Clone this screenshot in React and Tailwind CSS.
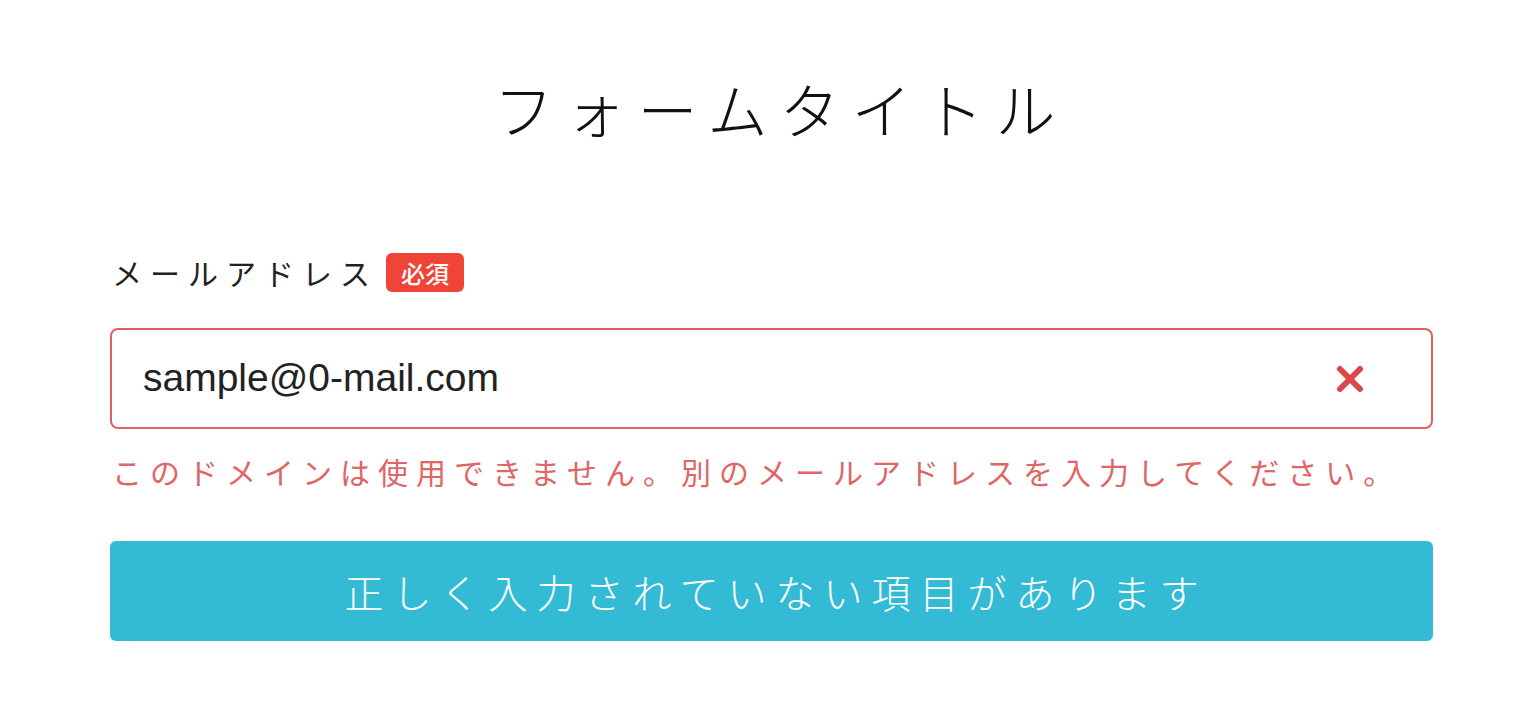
import React from 'react';

const jp = { fontFamily: '"Noto Sans CJK JP", "Noto Sans", sans-serif' };

function App() {
  return (
    <div className="min-h-screen bg-white" style={jp}>
      <div className="w-[1323px] ml-[110px] pt-[72px]">
        <h1 className="text-center text-[60px] leading-[72px] font-light tracking-[12px] text-[#111] pl-[18px]">
          フォームタイトル
        </h1>

        <div className="mt-[108px] flex items-center gap-[8px] pl-[2px]">
          <span className="text-[30px] leading-[40px] tracking-[8px] text-[#222]">メールアドレス</span>
          <span className="bg-[#f04438] text-white text-[24px] leading-[39px] px-[15px] rounded-[6px] font-medium">必須</span>
        </div>

        <div className="mt-[36px] h-[101px] border-2 border-[#e06060] rounded-[8px] flex items-center justify-between pl-[31px] pr-[66px]">
          <span className="text-[39px] text-[#222]" style={{ fontFamily: '"Liberation Sans", Arial, sans-serif' }}>
            sample@0-mail.com
          </span>
          <svg width="30" height="30" viewBox="0 0 30 30" fill="none">
            <path d="M5 5 L25 25 M25 5 L5 25" stroke="#d9484a" strokeWidth="6" strokeLinecap="round" />
          </svg>
        </div>

        <p className="mt-[22px] pl-[2px] text-[30px] leading-[40px] tracking-[8px] text-[#e06565]">
          このドメインは使用できません。別のメールアドレスを入力してください。
        </p>

        <button className="mt-[50px] w-full h-[100px] bg-[#33bbd5] rounded-[6px] text-white text-[39px] tracking-[9px] font-light pl-[9px]">
          正しく入力されていない項目があります
        </button>
      </div>
    </div>
  );
}

export default App;
